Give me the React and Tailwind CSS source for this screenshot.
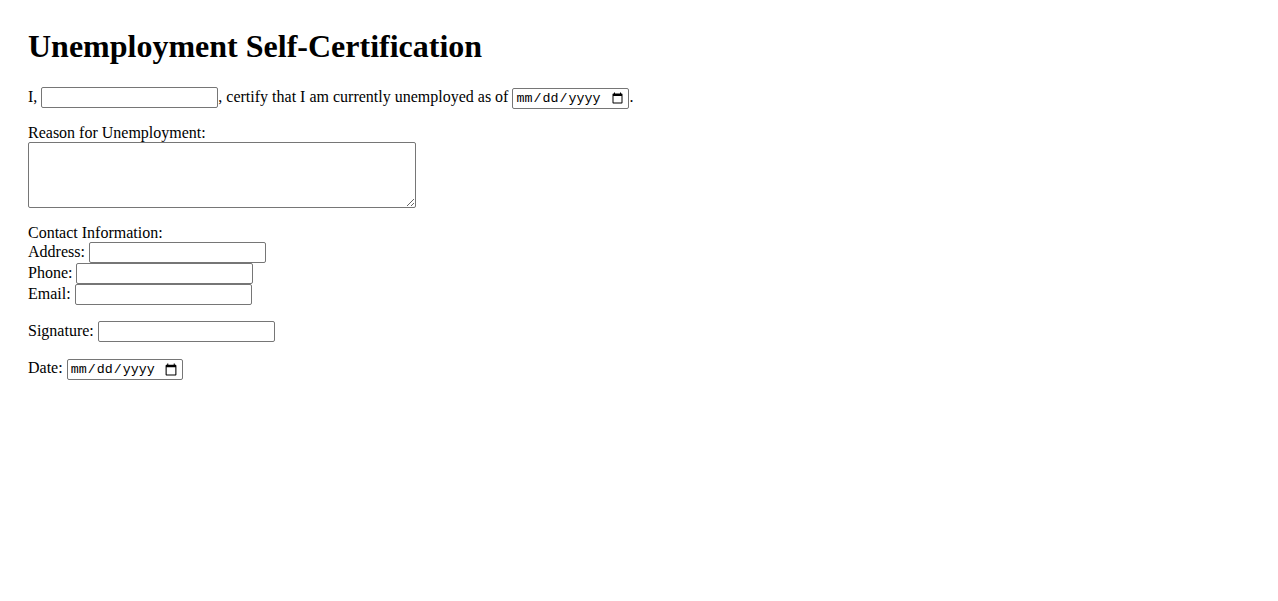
const textInput =
  'inline-block align-baseline w-[177px] h-[21px] border border-[#767676] rounded-[2px] bg-white px-[2px] py-[1px] text-[13.33px] leading-[normal] font-["Liberation_Sans",sans-serif]';

const dateInput =
  'inline-block align-baseline h-[21px] border border-[#767676] rounded-[2px] bg-white px-[2px] py-[1px] text-[13.33px] leading-[normal] text-black font-["Liberation_Mono",monospace]';

export default function App() {
  return (
    <div className="min-h-[601px] bg-white px-[28px] pt-[28px] text-[16px] leading-[normal] text-black font-['Liberation_Serif',serif]">
      <h1 className="m-0 text-[32px] font-bold leading-[normal]">Unemployment Self-Certification</h1>

      <form>
        <p className="mt-[22px] mb-0">
          I, <input type="text" className={textInput} />, certify that I am currently unemployed as of{' '}
          <input type="date" className={`${dateInput} w-[117px]`} />.
        </p>

        <p className="mt-[15px] mb-4">
          <label>Reason for Unemployment:</label>
          <br />
          <textarea className="inline-block align-bottom w-[388px] h-[66px] border border-[#767676] rounded-[2px] bg-white p-[2px] text-[13.33px] font-['Liberation_Mono',monospace] resize"></textarea>
        </p>

        <p className="my-4">
          Contact Information:
          <br />
          Address: <input type="text" className={textInput} />
          <br />
          Phone: <input type="text" className={textInput} />
          <br />
          Email: <input type="email" className={textInput} />
        </p>

        <p className="my-4">
          Signature: <input type="text" className={textInput} />
        </p>

        <p className="mt-[17px] mb-4">
          Date: <input type="date" className={`${dateInput} w-[116px]`} />
        </p>
      </form>
    </div>
  );
}
